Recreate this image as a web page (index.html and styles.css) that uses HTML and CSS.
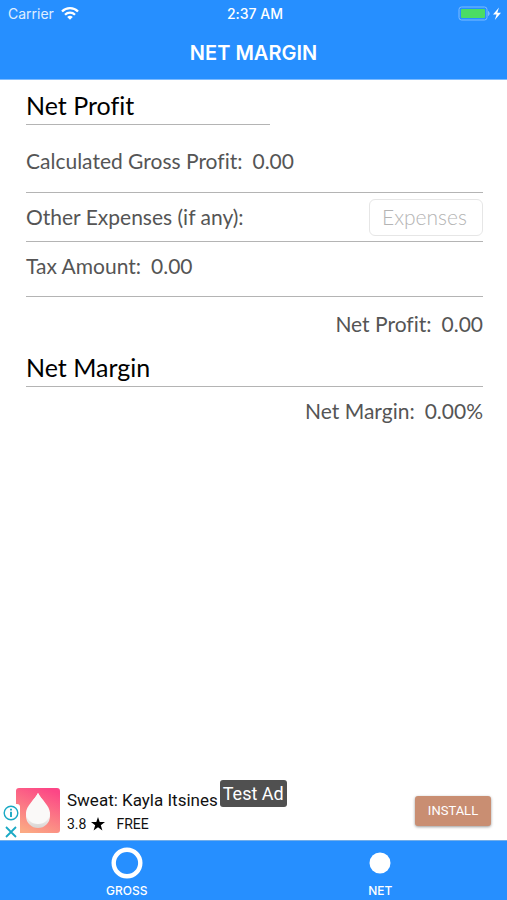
FILE: index.html
```html
<!DOCTYPE html>
<html lang="en">
<head>
<meta charset="utf-8">
<meta name="viewport" content="width=device-width, initial-scale=1">
<title>Net Margin</title>
<link rel="stylesheet" href="styles.css">
</head>
<body>
<header class="header">
  <div class="status">
    <div class="carrier">
      <span>Carrier</span>
      <svg width="18" height="13" viewBox="0 0 18 13" fill="none" stroke="#fff" stroke-width="2.3" aria-hidden="true"><path d="M1 4.5a11.3 11.3 0 0 1 16 0"/><path d="M4 7.7a7.1 7.1 0 0 1 10 0"/><path d="M9 12.8 6.2 10a4 4 0 0 1 5.6 0z" fill="#fff" stroke="none"/></svg>
    </div>
    <span class="clock">2:37 AM</span>
    <div class="power">
      <svg width="44" height="16" viewBox="0 0 44 16" aria-hidden="true"><rect x="1" y="1" width="28" height="13" rx="2.5" fill="none" stroke="#7dbbff"/><rect x="3" y="3" width="24" height="9" rx="1" fill="#4bdc64"/><path d="M30.500 5.500q1.500 2 0 4z" fill="#7dbbff" stroke="#7dbbff"/><path d="m41 1.500-6 7h3.600l-1.800 5.500 6.200-7.300h-3.700z" fill="#fff"/></svg>
    </div>
  </div>
  <h1 class="title">NET MARGIN</h1>
</header>
<main class="content">
  <h2 class="heading heading-short">Net Profit</h2>
  <div class="row row-gross"><span>Calculated Gross Profit:</span><span>0.00</span></div>
  <div class="row row-input">
    <label for="expenses">Other Expenses (if any):</label>
    <input class="field" id="expenses" type="text" placeholder="Expenses">
  </div>
  <div class="row row-tax"><span>Tax Amount:</span><span>0.00</span></div>
  <div class="row row-result row-profit"><span>Net Profit:</span><span>0.00</span></div>
  <h2 class="heading">Net Margin</h2>
  <div class="row row-result"><span>Net Margin:</span><span>0.00%</span></div>
</main>
<aside class="ad">
  <div class="ad-art">
    <svg class="ad-logo" width="44" height="45" viewBox="0 0 44 45" aria-hidden="true">
      <defs>
        <linearGradient id="sky" x1=".7" y1="0" x2=".3" y2="1"><stop stop-color="#fc4686"/><stop offset="1" stop-color="#fba984"/></linearGradient>
        <linearGradient id="drop" x1="0" y1="0" x2="0" y2="1"><stop offset=".6" stop-color="#fbfaf9"/><stop offset="1" stop-color="#d8d3d1"/></linearGradient>
      </defs>
      <rect width="44" height="45" rx="3" fill="url(#sky)"/>
      <path d="M22 5c3 6 12 15 12 23a12 12 0 0 1-24 0C10 20 19 11 22 5z" fill="url(#drop)"/>
      <path d="M22 5c3 6 12 13 12 20a12 11 0 0 1-24 0C10 18 19 11 22 5z" fill="#faf9f8"/>
    </svg>
    <div class="ad-controls">
      <button class="ad-control" type="button" aria-label="Ad information"><svg width="16" height="16" viewBox="0 0 16 16" fill="none" stroke="#1aa9c4" stroke-width="1.400"><circle cx="8" cy="8" r="6.800"/><path d="M8 6.700V12M8 3.700v1.800" stroke-width="1.900"/></svg></button>
      <button class="ad-control" type="button" aria-label="Close ad"><svg width="16" height="16" viewBox="0 0 16 16" fill="none" stroke="#1aa9c4" stroke-width="1.800"><path d="m3 3 10 10M13 3 3 13"/></svg></button>
    </div>
  </div>
  <div class="ad-text">
    <div class="ad-name">Sweat: Kayla Itsines<span class="ad-badge">Test Ad</span></div>
    <div class="ad-meta"><span>3.8</span><svg width="14" height="14" viewBox="0 0 14 14" aria-hidden="true"><path d="m7 0 1.700 5H14L9.800 8.200 11.400 13.500 7 10.300l-4.400 3.200L4.200 8.200 0 5h5.300z"/></svg><span class="ad-price">FREE</span></div>
  </div>
  <button class="install" type="button">INSTALL</button>
</aside>
<nav class="tabs">
  <a class="tab" href="#gross"><svg width="32" height="32" viewBox="0 0 32 32" aria-hidden="true"><circle cx="16" cy="16" r="13.300" fill="none" stroke="#fff" stroke-width="4.400"/></svg><span>GROSS</span></a>
  <a class="tab" href="#net" aria-current="page"><svg width="32" height="32" viewBox="0 0 32 32" aria-hidden="true"><circle cx="16" cy="16" r="10.500" fill="#fff"/></svg><span>NET</span></a>
</nav>
</body>
</html>
```
FILE: styles.css
```css
* {
  box-sizing: border-box;
}

body {
  margin: 0;
  min-height: 100vh;
  display: flex;
  flex-direction: column;
  background: #fff;
  color: #555;
  font-family: Lato, sans-serif;
  font-variant-ligatures: none;
}

.header {
  background: #268fff;
  border-bottom: 1px solid #7dbbff;
  color: #fff;
  font-family: Inter, sans-serif;
}

.status {
  display: grid;
  grid-template-columns: 1fr auto 1fr;
  align-items: center;
  height: 27px;
  padding: 0 5px 0 8px;
  font-size: 14px;
}

.carrier {
  display: flex;
  align-items: center;
  gap: 7px;
}

.carrier span {
  opacity: 0.85;
}

.clock {
  font-weight: 500;
}

.power {
  display: flex;
  justify-content: flex-end;
}

.title {
  margin: 0;
  font-size: 20px;
  font-weight: 600;
  line-height: 52px;
  text-align: center;
}

.content {
  flex: 1;
  padding: 0 24px 0 26px;
}

.heading {
  margin: 0;
  padding: 1px 0;
  border-bottom: 1px solid #b4b4b4;
  color: #000;
  font-size: 25px;
  font-weight: 400;
  line-height: 36px;
}

.heading-short {
  width: 244px;
  max-width: 100%;
  padding-top: 7px;
}

.row {
  display: flex;
  gap: 10px;
  border-bottom: 1px solid #b4b4b4;
  font-size: 21px;
  line-height: 48px;
}

.row-gross {
  padding: 12px 0 7px;
}

.row-input {
  justify-content: space-between;
  align-items: center;
}

.row-tax {
  padding-bottom: 6px;
}

.row-result {
  justify-content: flex-end;
  border-bottom: 0;
}

.row-profit {
  padding-top: 3px;
}

.field {
  width: 114px;
  height: 37px;
  padding: 0 12px 2px;
  border: 1px solid #e6e6e6;
  border-radius: 6px;
  background: #fff;
  color: #555;
  font: 300 21px Lato, sans-serif;
}

.field::placeholder {
  color: #b4b4b4;
}

.ad {
  display: flex;
  align-items: center;
  height: 61px;
  padding: 2px 16px 0;
  color: #111;
  font-family: Roboto, sans-serif;
}

.ad-art {
  position: relative;
  height: 45px;
}

.ad-logo {
  display: block;
}

.ad-controls {
  position: absolute;
  left: -13px;
  top: 16px;
  display: grid;
  gap: 2px;
  background: #fff;
  border-radius: 3px;
}

.ad-control {
  display: block;
  width: 17px;
  height: 17px;
  padding: 0;
  border: 0;
  background: none;
}

.ad-control svg {
  display: block;
}

.ad-text {
  flex: 1;
  padding: 2px 0 0 7px;
}

.ad-name {
  position: relative;
  width: max-content;
  font-size: 17px;
  line-height: 24px;
}

.ad-badge {
  position: absolute;
  left: calc(100% + 2px);
  bottom: 5px;
  padding: 0 3px;
  border-radius: 3px;
  background: #505050;
  color: #fff;
  font-size: 18px;
  line-height: 27px;
  white-space: nowrap;
}

.ad-meta {
  display: flex;
  align-items: center;
  gap: 5px;
  font-size: 14px;
  line-height: 24px;
}

.ad-price {
  margin-left: 6px;
}

.install {
  width: 76px;
  height: 30px;
  padding: 0;
  border: 0;
  border-radius: 3px;
  background: #c98e72;
  box-shadow: 0 1px 3px rgba(0, 0, 0, 0.4);
  color: #fff;
  font: 13px Roboto, sans-serif;
}

.tabs {
  display: grid;
  grid-template-columns: 1fr 1fr;
  height: 60px;
  border-top: 1px solid #72aeea;
  background: #268fff;
  font-family: Inter, sans-serif;
}

.tab {
  display: flex;
  flex-direction: column;
  align-items: center;
  gap: 4px;
  padding-top: 6px;
  color: #fff;
  font-size: 12px;
  font-weight: 500;
  line-height: 16px;
  text-decoration: none;
}
```
